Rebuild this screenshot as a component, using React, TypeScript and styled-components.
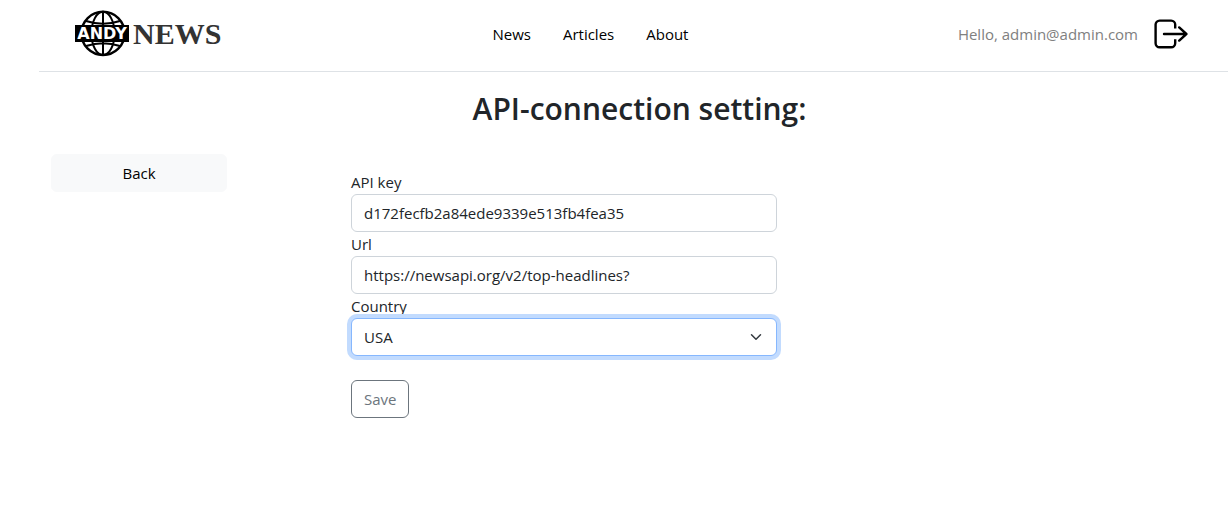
import React, { useState } from "react";
import styled, { createGlobalStyle } from "styled-components";

const GlobalStyle = createGlobalStyle`
  *, *::before, *::after { box-sizing: border-box; }
  body {
    margin: 0;
    background: #fff;
    color: #212529;
    font-family: "Segoe UI", "Open Sans", "Noto Sans", sans-serif;
    font-size: 15px;
    line-height: 24px;
  }
  button, input, select { font: inherit; }
`;

const Page = styled.div`
  margin-left: 39px;
  overflow-x: clip;
`;

const Header = styled.header`
  display: flex;
  align-items: center;
  justify-content: space-between;
  height: 72px;
  padding: 0 40px 4px 36px;
  border-bottom: 1px solid #dee2e6;
`;

const LogoLink = styled.a`
  display: flex;
`;

const Nav = styled.nav`
  display: flex;
  gap: 32px;
`;

const NavLink = styled.a`
  color: #000;
  text-decoration: none;
`;

const Account = styled.div`
  display: flex;
  align-items: center;
  gap: 16px;
  color: #808080;
`;

const IconButton = styled.button`
  display: flex;
  padding: 0;
  border: 0;
  background: none;
  color: #000;
  cursor: pointer;
`;

const Title = styled.h2`
  margin: 18px 0 0 12px;
  font-size: 30px;
  line-height: 38px;
  font-weight: 600;
  text-align: center;
`;

const Row = styled.main`
  display: grid;
  grid-template-columns: 2fr 1fr 9fr;
  align-items: start;
  margin: 26px -11px 0 0;
`;

const Side = styled.div`
  padding: 0 12px;
`;

const Content = styled.form`
  grid-column: 3;
  width: 50%;
  padding: 16px 12px 0;
`;

const Button = styled.button<{ $variant: "light" | "outline" }>`
  width: ${(p) => (p.$variant === "light" ? "100%" : "auto")};
  padding: 6px 12px;
  border: 1px solid ${(p) => (p.$variant === "light" ? "#f8f9fa" : "#6c757d")};
  border-radius: 6px;
  background: ${(p) => (p.$variant === "light" ? "#f8f9fa" : "transparent")};
  color: ${(p) => (p.$variant === "light" ? "#000" : "#6c757d")};
  cursor: pointer;
`;

const Label = styled.label`
  display: block;
`;

const controlStyle = `
  display: block;
  width: 100%;
  height: 38px;
  padding: 6px 12px;
  border: 1px solid #ced4da;
  border-radius: 6px;
  background: #fff;
  color: #212529;
  appearance: none;
  &:focus {
    outline: 0;
    border-color: #86b7fe;
    box-shadow: 0 0 0 4px #c2dbfe;
  }
`;

const Input = styled.input`${controlStyle}`;
const Select = styled.select`${controlStyle}`;

const SelectBox = styled.div`
  position: relative;
  margin-bottom: 24px;
`;

const Chevron = styled.svg`
  position: absolute;
  top: 13px;
  right: 13px;
  pointer-events: none;
`;

function Logo() {
  return (
    <svg width="148" height="48" viewBox="0 0 148 48" role="img" aria-label="Andy News">
      <g fill="none" stroke="#000" strokeWidth="2">
        <circle cx="28" cy="23.4" r="21.6" strokeWidth="2.4" />
        <ellipse cx="28" cy="23.4" rx="11.5" ry="21.6" />
        <path d="M28 2v43M11 11Q28 16.5 45 11M11 36Q28 30.5 45 36" />
      </g>
      <rect x="0" y="15" width="54" height="17" fill="#000" />
      <text x="27" y="29" textAnchor="middle" fill="#fff" fontFamily="DejaVu Sans, sans-serif" fontWeight="700" fontSize="16">
        ANDY
      </text>
      <text x="58" y="34" fill="#333" fontFamily="Liberation Serif, serif" fontWeight="700" fontSize="30">
        NEWS
      </text>
    </svg>
  );
}

function LogoutIcon() {
  return (
    <svg width="34" height="30" viewBox="0 0 34 30" fill="none" stroke="currentColor" strokeWidth="2.4" strokeLinecap="round" strokeLinejoin="round" aria-hidden="true">
      <path strokeLinecap="butt" d="M21.2 9.5V5.6a4 4 0 0 0-4-4H5.6a4 4 0 0 0-4 4v18.6a4 4 0 0 0 4 4h11.6a4 4 0 0 0 4-4v-3.9" />
      <path d="M10 15h22.4M25.2 8.4l7.2 6.6-7.2 6.6" />
    </svg>
  );
}

export default function App() {
  const [apiKey, setApiKey] = useState("d172fecfb2a84ede9339e513fb4fea35");
  const [url, setUrl] = useState("https://newsapi.org/v2/top-headlines?");

  return (
    <>
      <GlobalStyle />
      <Page>
        <Header>
          <LogoLink href="#"><Logo /></LogoLink>
          <Nav>
            <NavLink href="#news">News</NavLink>
            <NavLink href="#articles">Articles</NavLink>
            <NavLink href="#about">About</NavLink>
          </Nav>
          <Account>
            <span>Hello, admin@admin.com</span>
            <IconButton type="button" aria-label="Log out"><LogoutIcon /></IconButton>
          </Account>
        </Header>
        <Title>API-connection setting:</Title>
        <Row>
          <Side>
            <Button $variant="light" type="button">Back</Button>
          </Side>
          <Content onSubmit={(e) => e.preventDefault()}>
            <Label htmlFor="api-key">API key</Label>
            <Input id="api-key" value={apiKey} onChange={(e) => setApiKey(e.target.value)} />
            <Label htmlFor="url">Url</Label>
            <Input id="url" value={url} onChange={(e) => setUrl(e.target.value)} />
            <Label htmlFor="country">Country</Label>
            <SelectBox>
              <Select id="country" defaultValue="us" autoFocus>
                <option value="us">USA</option>
              </Select>
              <Chevron width="16" height="12" viewBox="0 0 16 16" fill="none" stroke="#343a40" strokeWidth="2" strokeLinecap="round" strokeLinejoin="round" aria-hidden="true">
                <path d="m2 5 6 6 6-6" />
              </Chevron>
            </SelectBox>
            <Button $variant="outline" type="submit">Save</Button>
          </Content>
        </Row>
      </Page>
    </>
  );
}
